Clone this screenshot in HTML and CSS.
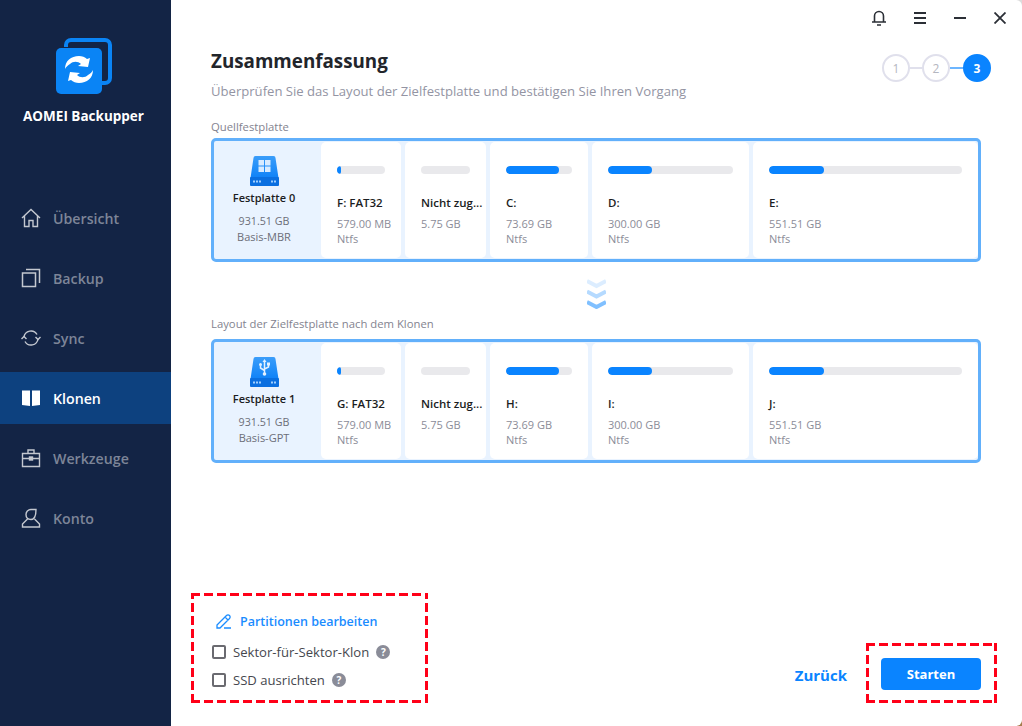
FILE: index.html
```html
<!DOCTYPE html>
<html lang="de">
<head>
    <meta charset="UTF-8">
    <title>AOMEI Backupper</title>
    <link rel="stylesheet" href="styles.css">
</head>
<body>
<div class="window">
    <aside class="sidebar">
        <div class="brand">
            <svg class="brand-logo" width="56" height="56" viewBox="0 0 56 56">
                <path d="M10 9V7a5 5 0 0 1 5-5h34a5 5 0 0 1 5 5v33a5 5 0 0 1-5 5h-3" fill="none" stroke="#0a84f5" stroke-width="4"/>
                <rect x="0" y="10" width="46" height="46" rx="5" fill="#0a84f5"/>
                <path d="M9 31c0-8 6-13 14-13 3 0 6 1 8 3l3-1-2 9-10-1 3-2c-3-3-8-3-11 0-2 1-4 3-5 5z" fill="#fff"/>
                <path d="M37 32c0 8-6 13-14 13-3 0-6-1-8-3l-3 1 2-9 10 1-3 2c3 3 8 3 11 0 2-1 4-3 5-5z" fill="#fff"/>
            </svg>
            <div class="brand-name">AOMEI Backupper</div>
        </div>
        <nav class="nav">
            <a class="nav-item">
                <svg width="20" height="20" viewBox="0 0 20 20" fill="none" stroke="#c4c8d0" stroke-width="1.400"><path d="M1 10 10 1.500 19 10M3.500 8v10.500h4.500v-6h4v6h4.500V8"/></svg>
                Übersicht
            </a>
            <a class="nav-item">
                <svg width="20" height="20" viewBox="0 0 20 20" fill="none" stroke="#c4c8d0" stroke-width="1.500"><rect x="1.500" y="5" width="13" height="13.500"/><path d="M5 1.500h13.500V15"/></svg>
                Backup
            </a>
            <a class="nav-item">
                <svg width="20" height="20" viewBox="0 0 20 20" fill="none" stroke="#c4c8d0" stroke-width="1.400"><path d="M3 9a7 7 0 0 1 13-2.500M17 11a7 7 0 0 1-13 2.500"/><path d="M.5 11 3 8.500 5.500 11M14.500 9 17 11.500 19.500 9"/></svg>
                Sync
            </a>
            <a class="nav-item active">
                <svg width="20" height="20" viewBox="0 0 20 20" fill="#fff"><path d="M1 2.500h8v15.500l-8-1zM11 2.500h8v14.500l-8 1z"/></svg>
                Klonen
            </a>
            <a class="nav-item">
                <svg width="20" height="20" viewBox="0 0 20 20" fill="none" stroke="#c4c8d0" stroke-width="1.400"><path d="M1.500 5.500h17v13h-17zM1.500 10.500h17M7 5.500V2h6v3.500"/><rect x="8.500" y="9" width="3" height="3" fill="#c4c8d0"/></svg>
                Werkzeuge
            </a>
            <a class="nav-item">
                <svg width="20" height="20" viewBox="0 0 20 20" fill="none" stroke="#c4c8d0" stroke-width="1.400"><path d="M10 1.500h5c0 6-1.500 10-5 10s-5-2-5-5c0-2.500 2-5 5-5zM6.500 11 1.500 16v3h17v-3l-5-5"/></svg>
                Konto
            </a>
        </nav>
    </aside>

    <main class="main">
        <div class="titlebar">
            <svg width="14" height="16" viewBox="0 0 14 16" fill="none" stroke="#2b2f36" stroke-width="1.600"><path d="M0 12h14M2.500 12V6a4.500 4.500 0 0 1 9 0v6M5 15h4"/></svg>
            <svg width="12" height="12" viewBox="0 0 12 12" stroke="#2b2f36" stroke-width="2"><path d="M0 1h12M0 6h12M0 11h12"/></svg>
            <svg width="12" height="12" viewBox="0 0 12 12" stroke="#2b2f36" stroke-width="2"><path d="M0 6h12"/></svg>
            <svg width="12" height="12" viewBox="0 0 12 12" stroke="#2b2f36" stroke-width="1.800"><path d="M.5.500l11 11M11.500.500l-11 11"/></svg>
        </div>

        <div class="content">
            <div class="heading">
                <div>
                    <h1>Zusammenfassung</h1>
                    <p class="subtitle">Überprüfen Sie das Layout der Zielfestplatte und bestätigen Sie Ihren Vorgang</p>
                </div>
                <div class="steps">
                    <span class="step">1</span>
                    <span class="step-line"></span>
                    <span class="step">2</span>
                    <span class="step-line current"></span>
                    <span class="step current">3</span>
                </div>
            </div>

            <div class="section-label first">Quellfestplatte</div>
            <div class="disk-panel">
                <div class="disk-cell">
                    <svg width="29" height="31" viewBox="0 0 29 31">
                        <defs>
                            <linearGradient id="diskTop" x1="0" y1="0" x2="0" y2="1">
                                <stop offset="0" stop-color="#3a9dfa"/>
                                <stop offset="1" stop-color="#0f82f7"/>
                            </linearGradient>
                        </defs>
                        <path d="M5.500 0h18a2 2 0 0 1 2 2l3 20H.5l3-20a2 2 0 0 1 2-2z" fill="url(#diskTop)"/>
                        <rect x="0" y="21" width="29" height="9" rx="1" fill="#0a6fe0"/>
                        <path d="M3 25.500h8M21 25.500h5" stroke="#9fd0ff" stroke-width="2" stroke-dasharray="2 1"/>
                        <path d="M8.500 4H14v5.500H8.500zM15 4h5.500v5.500H15zM8.500 10.500H14V16H8.500zM15 10.500h5.500V16H15z" fill="#d8ebff"/>
                    </svg>
                    <div class="disk-name">Festplatte 0</div>
                    <div class="disk-size">931.51 GB</div>
                    <div class="disk-type">Basis-MBR</div>
                </div>
                <div class="part"><div class="bar"><i class="fill fill-f"></i></div><b>F: FAT32</b><span>579.00 MB</span><span>Ntfs</span></div>
                <div class="part"><div class="bar"></div><b>Nicht zug...</b><span>5.75 GB</span></div>
                <div class="part"><div class="bar"><i class="fill fill-c"></i></div><b>C:</b><span>73.69 GB</span><span>Ntfs</span></div>
                <div class="part"><div class="bar"><i class="fill fill-d"></i></div><b>D:</b><span>300.00 GB</span><span>Ntfs</span></div>
                <div class="part"><div class="bar"><i class="fill fill-e"></i></div><b>E:</b><span>551.51 GB</span><span>Ntfs</span></div>
            </div>

            <div class="arrows">
                <svg width="19" height="30" viewBox="0 0 19 30" fill="none" stroke-width="4">
                    <path d="M0 2l9.500 5L19 2" stroke="#dcedff"/>
                    <path d="M0 12.500l9.500 5 9.500-5" stroke="#b5daff"/>
                    <path d="M0 23l9.500 5 9.500-5" stroke="#80c0ff"/>
                </svg>
            </div>

            <div class="section-label second">Layout der Zielfestplatte nach dem Klonen</div>
            <div class="disk-panel">
                <div class="disk-cell">
                    <svg width="29" height="31" viewBox="0 0 29 31">
                        <path d="M5.500 0h18a2 2 0 0 1 2 2l3 20H.5l3-20a2 2 0 0 1 2-2z" fill="url(#diskTop)"/>
                        <rect x="0" y="21" width="29" height="9" rx="1" fill="#0a6fe0"/>
                        <path d="M3 25.500h8M21 25.500h5" stroke="#9fd0ff" stroke-width="2" stroke-dasharray="2 1"/>
                        <path d="M14.500 4v13M14.500 13.500l-4-2.500V8.500M14.500 12l4-2V7.500" fill="none" stroke="#e4f1ff" stroke-width="1.500"/>
                        <path d="M14.500 2l2 3h-4z" fill="#e4f1ff"/>
                        <circle cx="10.500" cy="7.500" r="1.500" fill="#e4f1ff"/>
                        <rect x="17" y="5.500" width="3" height="3" fill="#e4f1ff"/>
                        <circle cx="14.500" cy="17" r="1.800" fill="#e4f1ff"/>
                    </svg>
                    <div class="disk-name">Festplatte 1</div>
                    <div class="disk-size">931.51 GB</div>
                    <div class="disk-type">Basis-GPT</div>
                </div>
                <div class="part"><div class="bar"><i class="fill fill-f"></i></div><b>G: FAT32</b><span>579.00 MB</span><span>Ntfs</span></div>
                <div class="part"><div class="bar"></div><b>Nicht zug...</b><span>5.75 GB</span></div>
                <div class="part"><div class="bar"><i class="fill fill-c"></i></div><b>H:</b><span>73.69 GB</span><span>Ntfs</span></div>
                <div class="part"><div class="bar"><i class="fill fill-d"></i></div><b>I:</b><span>300.00 GB</span><span>Ntfs</span></div>
                <div class="part"><div class="bar"><i class="fill fill-e"></i></div><b>J:</b><span>551.51 GB</span><span>Ntfs</span></div>
            </div>
        </div>

        <div class="footer">
            <div class="mark options">
                <a class="edit-link">
                    <svg width="16" height="16" viewBox="0 0 16 16" fill="none" stroke="#1a8cff" stroke-width="1.300"><path d="M1 12 10.500 2.500a1.800 1.800 0 0 1 3 3L4 15H1zM9 4l3 3M8 15h7"/></svg>
                    Partitionen bearbeiten
                </a>
                <label class="check"><span class="box"></span>Sektor-für-Sektor-Klon<span class="help">?</span></label>
                <label class="check"><span class="box"></span>SSD ausrichten<span class="help">?</span></label>
            </div>
            <div class="actions">
                <a class="back">Zurück</a>
                <div class="mark start-mark">
                    <button class="start-btn">Starten</button>
                </div>
            </div>
        </div>
    </main>
</div>
</body>
</html>
```

FILE: styles.css
```css
* {
    margin: 0;
    padding: 0;
    box-sizing: border-box;
}

body {
    width: 1022px;
    height: 726px;
    overflow: hidden;
    font-family: "Open Sans", "Noto Sans", sans-serif;
    background: linear-gradient(#dcdcdc 50%, #a67c4e 50%);
}

.window {
    display: flex;
    height: 726px;
    background: white;
    border-radius: 0 6px 6px 0;
    overflow: hidden;
}

/* sidebar */
.sidebar {
    width: 171px;
    flex-shrink: 0;
    background: #132445;
}

.brand {
    padding: 38px 4px 0 0;
    text-align: center;
}

.brand-logo {
    display: block;
    margin-left: 56px;
}

.brand-name {
    margin-top: 13px;
    color: white;
    font-size: 13.5px;
    font-weight: 700;
    line-height: 18px;
}

.nav {
    display: flex;
    flex-direction: column;
    gap: 8px;
    margin-top: 67px;
}

.nav-item {
    display: flex;
    align-items: center;
    gap: 12px;
    height: 52px;
    padding-left: 21px;
    color: #7d8598;
    font-size: 14.2px;
    font-weight: 600;
}

.nav-item.active {
    background: #0d417f;
    color: white;
}

/* main column */
.main {
    flex: 1;
    min-width: 0;
    display: flex;
    flex-direction: column;
    padding: 0 25px 23px 20px;
}

.titlebar {
    display: flex;
    justify-content: flex-end;
    align-items: center;
    gap: 28px;
    height: 36px;
    margin-right: -9px;
}

.content {
    flex: 1;
    padding: 0 16px 0 20px;
}

.heading {
    display: flex;
    justify-content: space-between;
    margin-right: -10px;
}

h1 {
    margin-top: 12px;
    color: #22252b;
    font-size: 18.8px;
    font-weight: 700;
    line-height: 26px;
}

.subtitle {
    margin-top: 8px;
    color: #9394a3;
    font-size: 13.1px;
    line-height: 18px;
}

.steps {
    display: flex;
    align-items: center;
    height: 28px;
    margin-top: 18px;
}

.step {
    display: flex;
    align-items: center;
    justify-content: center;
    width: 28px;
    height: 28px;
    border: 2px solid #e0e0ec;
    border-radius: 50%;
    color: #b4b6c0;
    font-size: 12px;
}

.step.current {
    background: #0a84ff;
    border-color: #0a84ff;
    color: white;
    font-weight: 700;
}

.step-line {
    width: 12px;
    height: 2px;
    background: #e0e0ec;
}

.step-line.current {
    width: 13px;
    background: #6db6ff;
}

.section-label {
    color: #83838f;
    font-size: 11.3px;
    line-height: 16px;
}

.section-label.first {
    margin-top: 19px;
}

.section-label.second {
    margin-bottom: 7px;
}

/* disk panels */
.disk-panel {
    display: grid;
    grid-template-columns: 103px 80px 81px 98px 157px 225px;
    column-gap: 4px;
    height: 124px;
    margin-top: 3px;
    padding: 1px 0;
    background: #e9f3ff;
    border: 3px solid #62b0fb;
    border-radius: 5px;
}

.disk-cell {
    display: flex;
    flex-direction: column;
    align-items: center;
    padding: 14px 3px 0 0;
}

.disk-name {
    margin-top: 3px;
    color: #1b1d22;
    font-size: 11px;
    font-weight: 600;
    line-height: 16px;
}

.disk-size {
    margin-top: 7px;
    color: #6c6e78;
    font-size: 10.7px;
    line-height: 16px;
}

.disk-type {
    color: #6c6e78;
    font-size: 11px;
    line-height: 16px;
}

.part {
    display: flex;
    flex-direction: column;
    padding: 24px 16px 0;
    background: white;
    border-radius: 5px;
    white-space: nowrap;
}

.part:nth-child(3) {
    padding-right: 0;
}

.part b {
    margin-top: 21px;
    color: #1b1d22;
    font-size: 11.5px;
    font-weight: 600;
    line-height: 16px;
}

.part span {
    color: #8b8c98;
    font-size: 11px;
    line-height: 15px;
}

.part b + span {
    margin-top: 5px;
}

.bar {
    height: 8px;
    background: #e9e9ec;
    border-radius: 4px;
    overflow: hidden;
}

.part:nth-child(3) .bar {
    width: 49px;
}

.fill {
    display: block;
    height: 8px;
    background: #0a84ff;
    border-radius: 4px;
}

.fill-f { width: 4px; }
.fill-c { width: 53px; }
.fill-d { width: 44px; }
.fill-e { width: 55px; }

.arrows {
    display: flex;
    justify-content: center;
    height: 62px;
    padding-top: 17px;
    margin-bottom: -8px;
}

/* bottom */
.footer {
    display: flex;
    justify-content: space-between;
    align-items: flex-end;
}

.mark {
    --red: #ff0018;
    background:
        repeating-linear-gradient(90deg, var(--red) 0 9px, transparent 9px 13px) top / 100% 3px no-repeat,
        repeating-linear-gradient(90deg, var(--red) 0 9px, transparent 9px 13px) bottom / 100% 3px no-repeat,
        repeating-linear-gradient(0deg, var(--red) 0 9px, transparent 9px 13px) left / 3px 100% no-repeat,
        repeating-linear-gradient(0deg, var(--red) 0 9px, transparent 9px 13px) right / 3px 100% no-repeat;
}

.options {
    width: 237px;
    height: 110px;
    padding: 17px 0 0 21px;
}

.edit-link {
    display: flex;
    align-items: center;
    gap: 8px;
    height: 22px;
    margin-left: 4px;
    color: #1a8cff;
    font-size: 12.5px;
    font-weight: 600;
}

.check {
    display: flex;
    align-items: center;
    height: 28px;
    color: #45474e;
    font-size: 13.1px;
}

.edit-link + .check {
    margin-top: 6px;
}

.box {
    width: 14px;
    height: 14px;
    margin-right: 7px;
    border: 2px solid #6a6a70;
    border-radius: 2px;
}

.help {
    display: flex;
    align-items: center;
    justify-content: center;
    width: 14px;
    height: 14px;
    margin-left: 7px;
    background: #8a8c98;
    border-radius: 50%;
    color: white;
    font-size: 10px;
    font-weight: 700;
}

.actions {
    display: flex;
    align-items: center;
    gap: 19px;
}

.back {
    margin-top: 3px;
    color: #0a84ff;
    font-size: 15px;
    font-weight: 700;
}

.start-mark {
    width: 131px;
    height: 60px;
    padding: 15px 0 0 15px;
}

.start-btn {
    width: 100px;
    height: 32px;
    background: #0a84ff;
    border: none;
    border-radius: 4px;
    color: white;
    font-family: inherit;
    font-size: 13px;
    font-weight: 700;
}
```
